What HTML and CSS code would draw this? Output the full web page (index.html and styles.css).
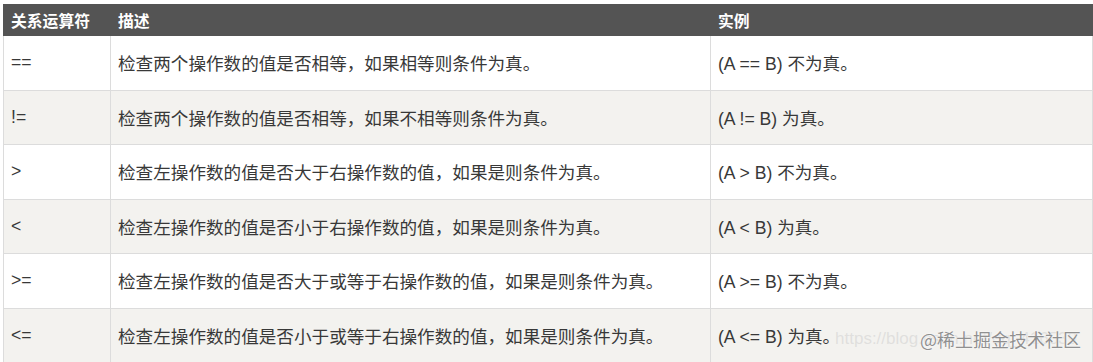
FILE: index.html
```html
<!DOCTYPE html>
<html lang="zh">
<head>
<meta charset="utf-8">
<link rel="stylesheet" href="styles.css">
</head>
<body>
<div class="wrap">
<table class="ops">
  <colgroup><col class="c1"><col class="c2"><col class="c3"></colgroup>
  <thead>
    <tr><th>关系运算符</th><th>描述</th><th>实例</th></tr>
  </thead>
  <tbody>
    <tr><td>==</td><td>检查两个操作数的值是否相等，如果相等则条件为真。</td><td>(A == B) 不为真。</td></tr>
    <tr><td>!=</td><td>检查两个操作数的值是否相等，如果不相等则条件为真。</td><td>(A != B) 为真。</td></tr>
    <tr><td>&gt;</td><td>检查左操作数的值是否大于右操作数的值，如果是则条件为真。</td><td>(A &gt; B) 不为真。</td></tr>
    <tr><td>&lt;</td><td>检查左操作数的值是否小于右操作数的值，如果是则条件为真。</td><td>(A &lt; B) 为真。</td></tr>
    <tr><td>&gt;=</td><td>检查左操作数的值是否大于或等于右操作数的值，如果是则条件为真。</td><td>(A &gt;= B) 不为真。</td></tr>
    <tr><td>&lt;=</td><td>检查左操作数的值是否小于或等于右操作数的值，如果是则条件为真。</td><td>(A &lt;= B) 为真。</td></tr>
  </tbody>
</table>
<div class="wm">
  <span class="wm-url">https://blog.csdn.net/qq_416539</span>
  <span class="wm-brand">@稀土掘金技术社区</span>
</div>
</div>
</body>
</html>
```
FILE: styles.css
```css
html, body {
  margin: 0;
  padding: 0;
  background: #fff;
}
body {
  font-family: "Liberation Sans", "Noto Sans CJK SC", sans-serif;
  color: #333;
  overflow: hidden;
}
.wrap {
  position: relative;
  padding: 4px 1px 0 3px;
  height: 358px;
}
.ops {
  border-collapse: collapse;
  width: 1089px;
  table-layout: fixed;
}
.c1 { width: 107px; }
.c2 { width: 600px; }
.c3 { width: 382px; }
.ops th {
  background: #545454;
  color: #fff;
  font-weight: bold;
  font-size: 15.8px;
  text-align: left;
  height: 31px;
  padding: 0 7px;
  border: 1px solid #545454;
  box-sizing: border-box;
}
.ops td {
  font-size: 17.6px;
  height: 54.5px;
  padding: 0 7px;
  border: 1px solid #dcdcdc;
  box-sizing: border-box;
  vertical-align: middle;
  white-space: nowrap;
  color: #383838;
}
.ops tbody tr:nth-child(even) td {
  background: #f3f2ef;
}
.wm {
  position: absolute;
  right: 12px;
  bottom: 10px;
  display: flex;
  align-items: center;
}
.wm-url {
  position: absolute;
  right: 4px;
  top: 3px;
  font-size: 17px;
  color: rgba(200, 200, 200, 0.45);
  white-space: nowrap;
}
.wm-brand {
  position: relative;
  font-family: "Noto Sans CJK SC", sans-serif;
  font-size: 18px;
  color: #909090;
  text-shadow: 0 0 2px #fff, 0 0 1px #fff;
  white-space: nowrap;
}
```
